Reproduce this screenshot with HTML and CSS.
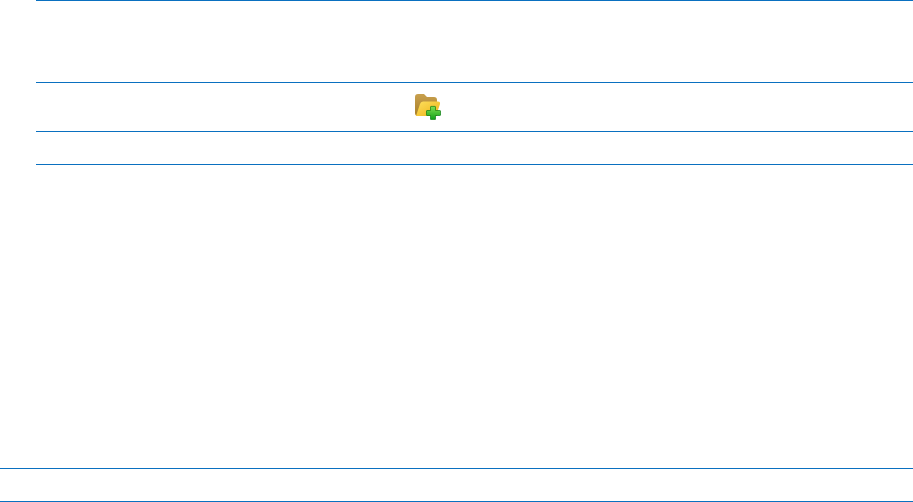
FILE: index.html
```html
<!DOCTYPE html>
<html lang="en">
<head>
	<meta charset="UTF-8">
	<title>Folders</title>
	<link rel="stylesheet" href="styles.css">
</head>
<body>
	<main class="tabla">
		<div class="fila fila1"></div>
		<div class="fila fila2">
			<svg class="icono" viewBox="0 0 26 26" width="26" height="26">
				<defs>
					<linearGradient id="atras" x1="0" y1="0" x2="0" y2="1">
						<stop offset="0" stop-color="#c8a04e"/>
						<stop offset="1" stop-color="#a87f26"/>
					</linearGradient>
					<linearGradient id="frente" x1="0" y1="0" x2="1" y2="1">
						<stop offset="0" stop-color="#fde05e"/>
						<stop offset="1" stop-color="#eeb216"/>
					</linearGradient>
					<linearGradient id="cruz" x1="0" y1="0" x2="0" y2="1">
						<stop offset="0" stop-color="#7fe052"/>
						<stop offset="1" stop-color="#10a018"/>
					</linearGradient>
					<filter id="suave" x="-5%" y="-5%" width="110%" height="110%">
						<feGaussianBlur stdDeviation="0.45"/>
					</filter>
				</defs>
				<g filter="url(#suave)">
					<path d="M0 3 Q0 0 3 0 H9 L12 3 H19 Q22 3 22 6 V22 H3 Q0 22 0 19 Z" fill="url(#atras)"/>
					<path d="M1 22 L5 10 Q5.6 7.5 8 7.5 H23 Q25.5 7.5 25 10 L21 22 Z" fill="url(#frente)"/>
					<path d="M15.5 13 Q15.5 12.4 16 12.4 H20 Q20.5 12.4 20.5 13 V16.5 H24.8 Q25.5 16.5 25.5 17 V21 Q25.5 21.5 24.8 21.5 H20.5 V25 Q20.5 25.6 20 25.6 H16 Q15.5 25.6 15.5 25 V21.5 H12 Q11.5 21.5 11.5 21 V17 Q11.5 16.5 12 16.5 H15.5 Z" fill="url(#cruz)" stroke="#0b7d12" stroke-width="0.7"/>
				</g>
			</svg>
		</div>
		<div class="fila fila3"></div>
	</main>
	<div class="vacio"></div>
	<footer class="pie"></footer>
</body>
</html>
```

FILE: styles.css
```css
body{
	margin: 0;
	padding: 0;
	background: white;
	font-family: "Liberation Sans", Arial, sans-serif;
}

.tabla{
	margin-left: 36px;
	border-top: 1px solid #0a70c0;
}

.fila{
	display: flex;
	justify-content: flex-start;
	align-items: center;
	border-bottom: 1px solid #0a70c0;
	box-sizing: border-box;
}

.fila1{
	height: 82px;
}

.fila2{
	height: 49px;
	padding-left: 379px;
}

.fila3{
	height: 33px;
}

.vacio{
	height: 303px;
}

.pie{
	height: 32px;
	border-top: 1px solid #0a70c0;
	border-bottom: 1px solid #0a70c0;
}
```
